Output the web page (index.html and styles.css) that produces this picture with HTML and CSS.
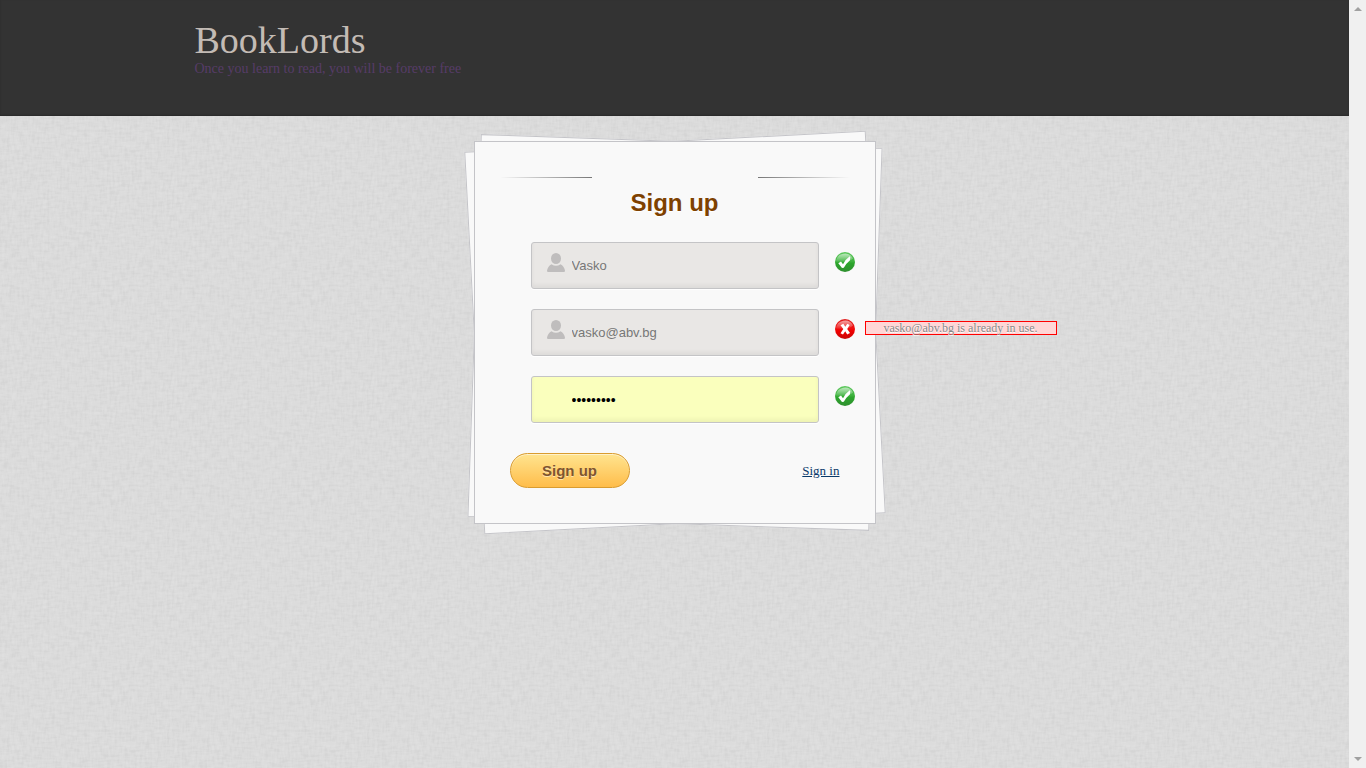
FILE: index.html
```html
<!DOCTYPE html>
<html lang="en">
<head>
<meta charset="utf-8">
<title>BookLords - Sign up</title>
<link rel="stylesheet" href="styles.css">
</head>
<body>
<svg class="defs" width="0" height="0" aria-hidden="true">
  <defs>
    <linearGradient id="green" x1="0" y1="0" x2="0" y2="1">
      <stop offset="0" stop-color="#5cc95c"/><stop offset=".5" stop-color="#3bb03b"/><stop offset=".55" stop-color="#2ca62c"/><stop offset="1" stop-color="#2f8f2f"/>
    </linearGradient>
    <linearGradient id="red" x1="0" y1="0" x2="0" y2="1">
      <stop offset="0" stop-color="#e02020"/><stop offset=".45" stop-color="#f01010"/><stop offset=".6" stop-color="#f00000"/><stop offset="1" stop-color="#c80808"/>
    </linearGradient>
    <linearGradient id="gloss" x1="0" y1="0" x2="0" y2="1">
      <stop offset="0" stop-color="#fff" stop-opacity=".6"/><stop offset="1" stop-color="#fff" stop-opacity=".08"/>
    </linearGradient>
    <symbol id="ok" viewBox="0 0 20 20">
      <circle cx="10" cy="10" r="10" fill="url(#green)"/>
      <path d="M1 9.500A9 9 0 0 1 18 6.500Q14 10.500 1 9.500z" fill="url(#gloss)"/>
      <path d="M3.300 11.200L6 9.500L8 12.200Q10.300 7.300 14.800 4.200L15.300 5.200L15 8.200Q11.500 11 8.800 15.800L7 16z" fill="#fff"/>
    </symbol>
    <symbol id="bad" viewBox="0 0 20 20">
      <circle cx="10" cy="10" r="10" fill="url(#red)"/>
      <path d="M1 9.500A9 9 0 0 1 18 6.500Q14 10.500 1 9.500z" fill="url(#gloss)"/>
      <path d="M5.500 6.200L8.300 4.700L10.300 7.700L12.300 4.800L14.700 6L12.200 10L15 14L12.200 15.500L10.200 12.300L8 15.500L5.500 14.200L8.300 10z" fill="#fff"/>
    </symbol>
    <symbol id="user" viewBox="0 0 18 19">
      <ellipse cx="9" cy="5.500" rx="5" ry="5.500"/>
      <path d="M0 17.500Q1 13 4.500 11.200Q9 14.500 13.500 11.200Q17 13 18 17.500Q18 19 17 19H1Q0 19 0 17.500z"/>
    </symbol>
  </defs>
</svg>
<div class="window">
  <div class="page">
    <header class="header">
      <div class="container">
        <h1 class="brand">BookLords</h1>
        <p class="tagline">Once you learn to read, you will be forever free</p>
      </div>
    </header>
    <main class="main">
      <form class="card">
        <div class="rules"><span class="rule"></span><span class="rule rule-right"></span></div>
        <h2 class="title">Sign up</h2>
        <div class="fields">
          <div class="row">
            <label class="field"><svg class="user"><use href="#user"/></svg><input type="text" value="Vasko" aria-label="Username"></label>
            <svg class="status"><use href="#ok"/></svg>
          </div>
          <div class="row">
            <label class="field"><svg class="user"><use href="#user"/></svg><input type="text" value="vasko@abv.bg" aria-label="Email"></label>
            <svg class="status"><use href="#bad"/></svg>
            <p class="error">vasko@abv.bg is already in use.</p>
          </div>
          <div class="row">
            <label class="field field-filled"><input type="password" value="bookworms" aria-label="Password"></label>
            <svg class="status"><use href="#ok"/></svg>
          </div>
        </div>
        <div class="actions">
          <button class="submit" type="button">Sign up</button>
          <a class="link" href="#">Sign in</a>
        </div>
      </form>
    </main>
  </div>
  <div class="scrollbar" aria-hidden="true"><span class="arrow-up"></span><span class="arrow-down"></span></div>
</div>
</body>
</html>
```
FILE: styles.css
```css
* { box-sizing: border-box; }
body {
  margin: 0;
  font-family: "Liberation Serif", serif;
  font-size: 12px;
}
h1, h2, p { margin: 0; font-weight: normal; }
.defs { position: absolute; }
.window { display: flex; min-height: 100vh; }
.page {
  flex: 1;
  min-width: 0;
  background-color: #dfdfdf;
  background-image: url("data:image/svg+xml,%3Csvg xmlns='http://www.w3.org/2000/svg' width='200' height='200'%3E%3Cfilter id='a' x='0' y='0' width='1' height='1'%3E%3CfeTurbulence type='fractalNoise' baseFrequency='.4 .1' numOctaves='2' stitchTiles='stitch'/%3E%3CfeColorMatrix values='0 0 0 0 0 0 0 0 0 0 0 0 0 0 0 .06 0 0 0 -.02'/%3E%3C/filter%3E%3Cfilter id='b' x='0' y='0' width='1' height='1'%3E%3CfeTurbulence type='fractalNoise' baseFrequency='.1 .4' numOctaves='2' stitchTiles='stitch'/%3E%3CfeColorMatrix values='0 0 0 0 0 0 0 0 0 0 0 0 0 0 0 .06 0 0 0 -.02'/%3E%3C/filter%3E%3Crect width='200' height='200' filter='url(%23a)'/%3E%3Crect width='200' height='200' filter='url(%23b)'/%3E%3C/svg%3E");
}
.header {
  min-height: 116px;
  padding-top: 20px;
  background: #333;
  box-shadow: inset 0 -1px 2px #0003;
}
.container { max-width: 960px; margin: 0 auto; }
.brand { font-size: 38px; line-height: 40px; color: #c3bbb5; }
.tagline { font-size: 14px; line-height: 18px; color: #573c68; }

.main {
  position: relative;
  z-index: 0;
  padding: 25px 0;
}
.card {
  position: relative;
  max-width: 402px;
  margin: 0 auto;
  padding: 35px 0;
  background: #f9f9f9;
}
.card, .card::before, .card::after {
  border: 1px solid #c4c4c8;
}
.card::before, .card::after {
  content: "";
  position: absolute;
  inset: -1px;
  z-index: -1;
  background: #f9f9f9;
}
.card::before { transform: rotate(-3deg); }
.card::after { transform: rotate(2deg); }
.rules {
  display: flex;
  justify-content: space-between;
  padding: 0 25px;
}
.rule { width: 92px; height: 1px; background: linear-gradient(to right, #f9f9f9, #777); }
.rule-right { background: linear-gradient(to left, #f9f9f9, #777); }
.title {
  padding: 10px 0 24px;
  font: bold 24px/30px "Liberation Sans", Arial, sans-serif;
  text-align: center;
  color: #7e4100;
  text-shadow: 0 1px 0 #fff;
}
.fields { display: grid; gap: 20px; padding-left: 56px; }
.row { position: relative; display: flex; gap: 16px; }
.field {
  display: flex;
  width: 288px;
  height: 47px;
  padding-left: 40px;
  background: #e9e7e5;
  border: 1px solid #c4c4c6;
  border-radius: 3px;
  box-shadow: inset 0 -3px 4px #0000000d, 0 1px 0 #fff;
}
.field-filled { background: #faffbd; }
.field input {
  width: 100%;
  padding: 0;
  border: 0;
  outline: 0;
  background: none;
  font: 13px "Liberation Sans", Arial, sans-serif;
  color: #777;
}
.field-filled input { font-size: 14px; color: #000; }
.user {
  position: absolute;
  left: 16px;
  top: 11px;
  width: 18px;
  height: 19px;
  fill: #bfbdbd;
}
.status { width: 20px; height: 20px; margin-top: 10px; }
.error {
  position: absolute;
  left: 334px;
  top: 12px;
  width: 192px;
  border: 1px solid #f00;
  background: #ffd6d6;
  line-height: 12px;
  text-align: center;
  color: #888;
  text-shadow: 0 1px 0 #fff;
}
.actions {
  display: flex;
  align-items: center;
  justify-content: space-between;
  padding: 30px 35px 0;
}
.submit {
  width: 120px;
  height: 35px;
  padding: 0;
  border: 1px solid #d99c30;
  border-radius: 18px;
  background: linear-gradient(#ffe48f, #ffbd4b);
  box-shadow: inset 0 1px 0 #fff8;
  font: bold 15px "Liberation Sans", Arial, sans-serif;
  color: #7e5530;
  text-shadow: 0 1px 0 #ffffff80;
}
.link { color: #0a3a6a; font-size: 13px; }

.scrollbar {
  display: flex;
  flex-direction: column;
  justify-content: space-between;
  align-items: center;
  width: 17px;
  padding: 7px 0;
  background: #f0f0f0;
}
.arrow-up, .arrow-down { border: 4px solid transparent; }
.arrow-up { border-top: 0; border-bottom-color: #a0a0a0; }
.arrow-down { border-bottom: 0; border-top-color: #a0a0a0; }
```
